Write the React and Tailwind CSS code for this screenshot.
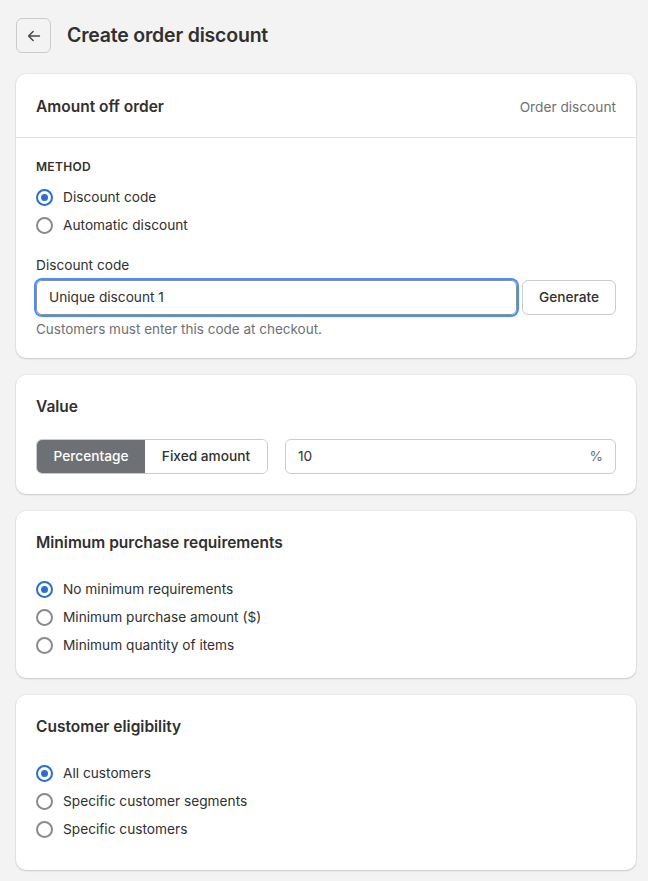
import { useState } from 'react';

function Radio({ label, checked, onChange }) {
  return (
    <label className="flex h-7 cursor-pointer items-center gap-[10px]" onClick={onChange}>
      <span
        className={
          'flex h-[17px] w-[17px] items-center justify-center rounded-full border-2 bg-white ' +
          (checked ? 'border-[#2c6ecb]' : 'border-[#8a8a8a]')
        }
      >
        {checked && <span className="h-[7px] w-[7px] rounded-full bg-[#2c6ecb]" />}
      </span>
      <span className="text-[13.7px] text-[#303030]">{label}</span>
    </label>
  );
}

function RadioGroup({ options, value, onChange }) {
  return (
    <div className="flex flex-col">
      {options.map((o) => (
        <Radio key={o} label={o} checked={value === o} onChange={() => onChange(o)} />
      ))}
    </div>
  );
}

function Card({ children, className = '' }) {
  return (
    <section className={'rounded-[10px] bg-white shadow-[0_1px_2px_rgba(0,0,0,0.15),0_0_0_1px_rgba(0,0,0,0.03)] ' + className}>
      {children}
    </section>
  );
}

export default function App() {
  const [method, setMethod] = useState('Discount code');
  const [type, setType] = useState('Percentage');
  const [minReq, setMinReq] = useState('No minimum requirements');
  const [elig, setElig] = useState('All customers');

  return (
    <div className="min-h-screen bg-[#f3f3f3] pt-[18px] pr-3 pb-4 pl-4 font-['Inter',sans-serif] text-[#303030]">
      <div className="flex items-center gap-4">
        <button
          type="button"
          className="flex h-[35px] w-[35px] items-center justify-center rounded-md border border-[#c9cccf] text-[#4a4a4a]"
        >
          <svg width="18" height="18" viewBox="0 0 20 20" fill="none" stroke="currentColor" strokeWidth="1.7" strokeLinecap="round" strokeLinejoin="round">
            <path d="M16 10H4M9 5l-5 5 5 5" />
          </svg>
        </button>
        <h1 className="text-[19.5px] font-semibold tracking-[-0.2px]">Create order discount</h1>
      </div>

      <div className="mt-[21px] flex flex-col gap-[17px]">
        <Card>
          <div className="flex h-16 items-center justify-between border-b border-[#e3e3e3] px-5 pt-[3px]">
            <h2 className="text-[15.5px] font-semibold">Amount off order</h2>
            <span className="text-[13.7px] text-[#6d7175]">Order discount</span>
          </div>
          <div className="px-5 pt-5 pb-[19px]">
            <div className="text-[12px] leading-[18px] font-semibold tracking-[0.3px]">METHOD</div>
            <div className="mt-[7px]">
              <RadioGroup options={['Discount code', 'Automatic discount']} value={method} onChange={setMethod} />
            </div>
            <div className="mt-4 text-[13.7px] leading-5">Discount code</div>
            <div className="mt-[5px] flex gap-[5px]">
              <div className="flex h-[35px] flex-1 items-center rounded-[6px] border border-[#8c9196] px-3 text-[13.7px] ring-2 ring-[#458fff]">
                Unique discount 1
              </div>
              <button
                type="button"
                className="h-[35px] w-[94px] rounded-[6px] border border-[#c9cccf] bg-white text-[13.7px] font-medium"
              >
                Generate
              </button>
            </div>
            <p className="mt-1 text-[13.5px] leading-5 text-[#6d7175]">Customers must enter this code at checkout.</p>
          </div>
        </Card>

        <Card className="px-5 pt-5 pb-5">
          <h2 className="text-[15.5px] leading-6 font-semibold">Value</h2>
          <div className="mt-5 flex gap-[17px]">
            <div className="flex h-[35px] overflow-hidden rounded-[6px] border border-[#c9cccf]">
              {['Percentage', 'Fixed amount'].map((t) => (
                <button
                  key={t}
                  type="button"
                  onClick={() => setType(t)}
                  className={
                    'h-full text-[13.7px] font-medium ' +
                    (t === 'Percentage' ? 'w-[108px] ' : 'w-[122px] ') +
                    (type === t ? 'bg-[#6d7175] text-white' : 'bg-white text-[#303030]')
                  }
                >
                  {t}
                </button>
              ))}
            </div>
            <div className="flex h-[35px] flex-1 items-center justify-between rounded-[6px] border border-[#c9cccf] px-3 text-[13.7px]">
              <span>10</span>
              <span className="text-[#6d7175]">%</span>
            </div>
          </div>
        </Card>

        <Card className="px-5 pt-5 pb-[19px]">
          <h2 className="text-[15.5px] leading-6 font-semibold">Minimum purchase requirements</h2>
          <div className="mt-5">
            <RadioGroup
              options={['No minimum requirements', 'Minimum purchase amount ($)', 'Minimum quantity of items']}
              value={minReq}
              onChange={setMinReq}
            />
          </div>
        </Card>

        <Card className="px-5 pt-5 pb-[27px]">
          <h2 className="text-[15.5px] leading-6 font-semibold">Customer eligibility</h2>
          <div className="mt-5">
            <RadioGroup
              options={['All customers', 'Specific customer segments', 'Specific customers']}
              value={elig}
              onChange={setElig}
            />
          </div>
        </Card>
      </div>
    </div>
  );
}
